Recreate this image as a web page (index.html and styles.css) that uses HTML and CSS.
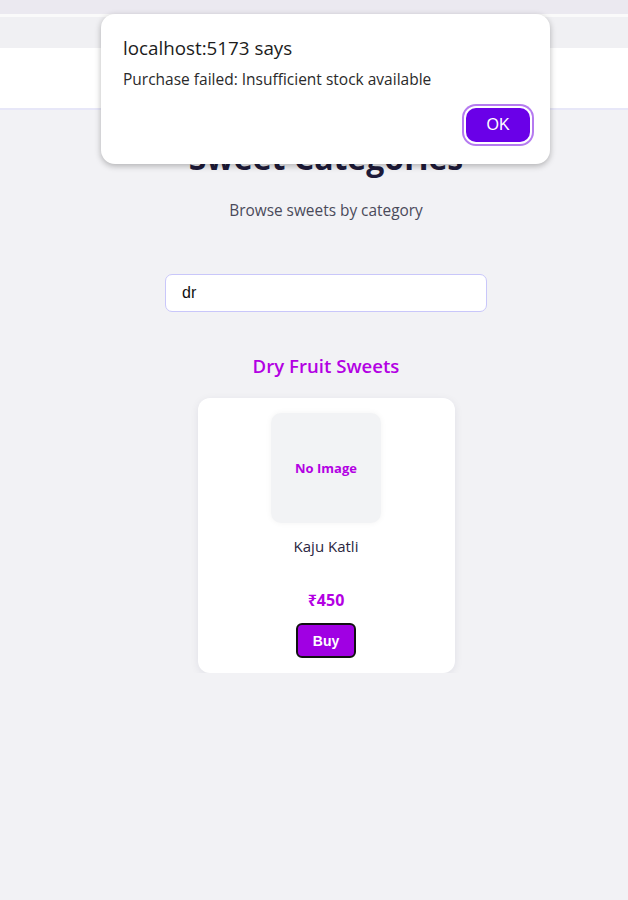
FILE: index.html
```html
<!DOCTYPE html>
<html lang="en">
<head>
<meta charset="utf-8">
<title>Sweet Categories</title>
<link rel="stylesheet" href="styles.css">
</head>
<body>
<div class="top-strip"></div>
<div class="top-line"></div>
<div class="top-band"></div>
<nav class="navbar"></nav>

<main class="page">
  <h1 class="page-title">Sweet Categories</h1>
  <p class="page-subtitle">Browse sweets by category</p>

  <div class="search-wrap">
    <input class="search" type="text" value="dr">
  </div>

  <section class="category">
    <h2 class="category-title">Dry Fruit Sweets</h2>
    <div class="cards">
      <div class="card">
        <div class="thumb">No Image</div>
        <div class="sweet-name">Kaju Katli</div>
        <div class="price">₹450</div>
        <button class="buy">Buy</button>
      </div>
    </div>
  </section>
</main>

<div class="dialog">
  <div class="dialog-title">localhost:5173 says</div>
  <div class="dialog-msg">Purchase failed: Insufficient stock available</div>
  <div class="dialog-actions">
    <button class="ok">OK</button>
  </div>
</div>
</body>
</html>
```

FILE: styles.css
```css
* { box-sizing: border-box; }

body {
  margin: 0;
  background: #f2f2f5;
  font-family: "Open Sans", "Noto Sans", sans-serif;
  color: #1e1b3a;
}

.top-strip { height: 14px; background: #ebe9f0; }
.top-line { height: 3px; background: #fafafa; }
.top-band { height: 31px; background: #f0f0f3; }
.navbar {
  height: 62px;
  background: #ffffff;
  border-bottom: 2px solid #e7e7f8;
}

.page {
  display: flex;
  flex-direction: column;
  align-items: center;
  padding-top: 28px;
  padding-left: 24px;
}

.page-title {
  margin: 0;
  font-size: 32px;
  font-weight: 700;
  line-height: 40px;
  color: #1e1b3a;
}

.page-subtitle {
  margin: 22px 0 0;
  font-size: 15.4px;
  line-height: 22px;
  color: #4a4a5a;
}

.search-wrap { margin-top: 52px; }

.search {
  width: 322px;
  height: 38px;
  border: 1px solid #c9c7fa;
  border-radius: 7px;
  background: #ffffff;
  padding: 0 16px;
  font-family: "Liberation Sans", Arial, sans-serif;
  font-size: 16px;
  color: #111111;
  outline: none;
}

.category {
  display: flex;
  flex-direction: column;
  align-items: center;
  margin-top: 42px;
}

.category-title {
  margin: 0;
  font-size: 18.6px;
  font-weight: 600;
  line-height: 24px;
  color: #b300e3;
}

.cards { margin-top: 20px; }

.card {
  width: 257px;
  background: #ffffff;
  border-radius: 12px;
  box-shadow: 0 2px 8px rgba(30, 30, 60, 0.08);
  display: flex;
  flex-direction: column;
  align-items: center;
  padding: 15px 0 15px;
}

.thumb {
  width: 110px;
  height: 110px;
  border-radius: 10px;
  background: #f2f3f5;
  box-shadow: 0 0 6px rgba(0, 0, 0, 0.05);
  display: flex;
  align-items: center;
  justify-content: center;
  font-size: 13px;
  font-weight: 700;
  color: #b300e3;
}

.sweet-name {
  margin-top: 13px;
  font-size: 15px;
  line-height: 20px;
  color: #2a2540;
}

.price {
  margin-top: 34px;
  font-size: 16px;
  font-weight: 700;
  line-height: 20px;
  color: #b300e3;
}

.buy {
  margin-top: 13px;
  width: 60px;
  height: 35px;
  border: 2px solid #111111;
  border-radius: 6px;
  background: #a000e3;
  color: #ffffff;
  font-family: "Liberation Sans", Arial, sans-serif;
  font-size: 14px;
  font-weight: 700;
}

.dialog {
  position: absolute;
  left: 101px;
  top: 14px;
  width: 449px;
  height: 150px;
  background: #ffffff;
  border-radius: 14px;
  box-shadow: 0 2px 6px rgba(0, 0, 0, 0.28);
  padding: 21px 20px 0 22px;
}

.dialog-title {
  font-size: 18.8px;
  line-height: 26px;
  color: #1c1c1c;
}

.dialog-msg {
  margin-top: 8px;
  font-size: 15.5px;
  line-height: 20px;
  color: #2a2a2a;
}

.dialog-actions {
  display: flex;
  justify-content: flex-end;
  margin-top: 19px;
}

.ok {
  width: 64px;
  height: 34px;
  border: none;
  border-radius: 10px;
  background: #6a00e8;
  color: #ffffff;
  font-family: "Liberation Sans", Arial, sans-serif;
  font-size: 16px;
  box-shadow: 0 0 0 2px #ffffff, 0 0 0 4px #b57af0;
}
```
